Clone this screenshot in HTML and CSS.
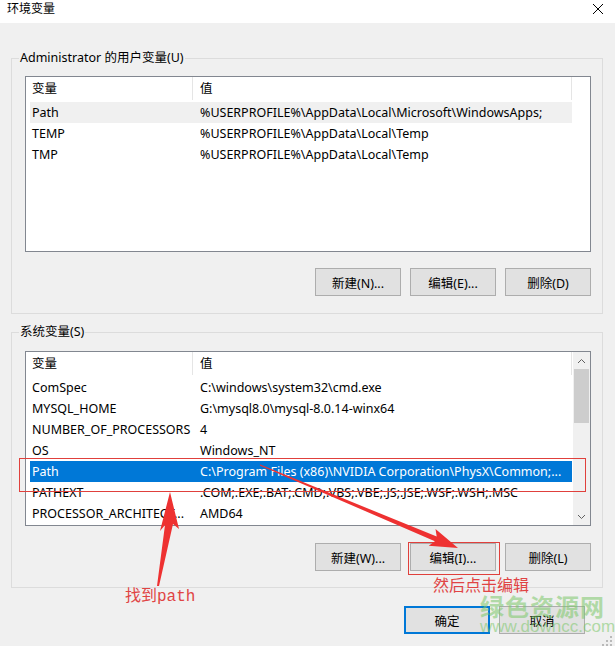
FILE: index.html
```html
<!DOCTYPE html>
<html lang="zh-CN">
<head>
  <meta charset="UTF-8" />
  <title>环境变量</title>
  <link rel="stylesheet" href="styles.css">
</head>
<body>

<div class="window">
  <div class="titlebar">
    <span class="title">环境变量</span>
    <svg class="close" width="12" height="12" viewBox="0 0 12 12">
      <path d="M1 1 L11 11 M11 1 L1 11" stroke="#000" stroke-width="1" fill="none"/>
    </svg>
  </div>

  <div class="content">
    <fieldset class="group">
      <legend>Administrator 的用户变量(U)</legend>
      <div class="listbox user-list">
        <div class="list-body">
          <div class="row head"><span class="c1">变量</span><span class="c2">值</span></div>
          <div class="row soft"><span class="c1">Path</span><span class="c2">%USERPROFILE%\AppData\Local\Microsoft\WindowsApps;</span></div>
          <div class="row"><span class="c1">TEMP</span><span class="c2">%USERPROFILE%\AppData\Local\Temp</span></div>
          <div class="row"><span class="c1">TMP</span><span class="c2">%USERPROFILE%\AppData\Local\Temp</span></div>
        </div>
      </div>
      <div class="btn-row">
        <button class="btn">新建(N)...</button>
        <button class="btn">编辑(E)...</button>
        <button class="btn">删除(D)</button>
      </div>
    </fieldset>

    <fieldset class="group second">
      <legend>系统变量(S)</legend>
      <div class="listbox sys-list">
        <div class="list-body">
          <div class="row head"><span class="c1">变量</span><span class="c2">值</span></div>
          <div class="row"><span class="c1">ComSpec</span><span class="c2">C:\windows\system32\cmd.exe</span></div>
          <div class="row"><span class="c1">MYSQL_HOME</span><span class="c2">G:\mysql8.0\mysql-8.0.14-winx64</span></div>
          <div class="row"><span class="c1">NUMBER_OF_PROCESSORS</span><span class="c2">4</span></div>
          <div class="row"><span class="c1">OS</span><span class="c2">Windows_NT</span></div>
          <div class="row selected"><span class="c1">Path</span><span class="c2">C:\Program Files (x86)\NVIDIA Corporation\PhysX\Common;...</span></div>
          <div class="row"><span class="c1">PATHEXT</span><span class="c2">.COM;.EXE;.BAT;.CMD;.VBS;.VBE;.JS;.JSE;.WSF;.WSH;.MSC</span></div>
          <div class="row"><span class="c1">PROCESSOR_ARCHITECT...</span><span class="c2">AMD64</span></div>
        </div>
        <div class="scrollbar">
          <div class="sb-arrow">
            <svg width="9" height="6" viewBox="0 0 9 6"><path d="M1 5 L4.5 1.5 L8 5" stroke="#606060" fill="none"/></svg>
          </div>
          <div class="sb-track">
            <div class="sb-thumb"></div>
          </div>
          <div class="sb-arrow">
            <svg width="9" height="6" viewBox="0 0 9 6"><path d="M1 1 L4.5 4.5 L8 1" stroke="#606060" fill="none"/></svg>
          </div>
        </div>
      </div>
      <div class="btn-row">
        <button class="btn">新建(W)...</button>
        <button class="btn">编辑(I)...</button>
        <button class="btn">删除(L)</button>
      </div>
    </fieldset>

    <div class="footer">
      <button class="btn default">确定</button>
      <button class="btn">取消</button>
    </div>
  </div>

  <!-- red marks drawn over the screenshot -->
  <svg class="marks" width="615" height="646" viewBox="0 0 615 646">
    <rect x="19.5" y="458.5" width="566" height="33" fill="none" stroke="#e0403c" stroke-width="1"/>
    <rect x="408.5" y="542.5" width="91" height="32" fill="none" stroke="#e0403c" stroke-width="1"/>
    <polygon fill="#ee3131" points="170,492 179,529 173,524 159,586 157,586 165,525 160,531"/>
    <polygon fill="#ee3131" points="458,548 435.5,529.1 436.7,536.6 260.2,464.5 259.8,465.5 434.9,541.2 428.7,545.7"/>
    <g fill="#b9b9b9">
      <rect x="610" y="636" width="2" height="2"/>
      <rect x="606" y="640" width="2" height="2"/>
      <rect x="610" y="640" width="2" height="2"/>
      <rect x="602" y="644" width="2" height="2"/>
      <rect x="606" y="644" width="2" height="2"/>
      <rect x="610" y="644" width="2" height="2"/>
    </g>
  </svg>
  <div class="note note-find">找到path</div>
  <div class="note note-edit">然后点击编辑</div>
  <div class="watermark">
    <div class="wm-name">绿色资源网</div>
    <div class="wm-url">www.downcc.com</div>
  </div>
</div>

</body>
</html>
```

FILE: styles.css
```css
body {
  margin: 0;
  font-family: "Noto Sans", "Noto Sans CJK SC", sans-serif;
  font-size: 12.5px;
  color: #000;
}
.window {
  width: 615px;
  height: 646px;
  background: #f0f0f0;
  position: relative;
  overflow: hidden;
}
.titlebar {
  height: 23px;
  background: #fff;
  display: flex;
  justify-content: space-between;
  padding: 0 11px 0 7px;
}
.title {
  font-size: 12px;
  line-height: 16px;
  font-family: "Noto Sans CJK SC", sans-serif;
}
.close { margin-top: 3px; }

.content {
  padding-top: 27px;
}
.group {
  margin: 0 12px 0 11px;
  border: 1px solid #dcdcdc;
  padding: 10px 11px 17px 13px;
  min-width: 0;
}
.group.second {
  margin-top: 10px;
  padding: 11px 11px 16px 13px;
}
.group legend {
  line-height: 16px;
  padding: 0 1px;
  margin-left: -6px;
}

.listbox {
  border: 1px solid #828790;
  background: #fff;
  display: flex;
}
.user-list { height: 174px; }
.sys-list { height: 173px; }
.list-body {
  flex: 1;
  padding-left: 4px;
  overflow: hidden;
}
.row {
  display: flex;
  width: 542px;
  height: 21px;
  line-height: 21px;
  white-space: nowrap;
}
.row .c1 {
  width: 161px;
  padding-left: 2px;
  overflow: hidden;
}
.row .c2 {
  width: 372px;
  padding-left: 7px;
  overflow: hidden;
}
.row.head {
  height: 25px;
  line-height: 24px;
}
.row.head .c1,
.row.head .c2 {
  border-right: 1px solid #e5e5e5;
  height: 23px;
}
.row.head .c1 { width: 160px; }
.row.head .c2 { width: 371px; }
.row.soft { background: #f0f0f0; }
.row.selected {
  background: #0078d7;
  color: #fff;
}

.scrollbar {
  width: 17px;
  background: #f0f0f0;
  display: flex;
  flex-direction: column;
}
.sb-arrow {
  height: 17px;
  display: flex;
  align-items: center;
  justify-content: center;
}
.sb-track { flex: 1; }
.sb-thumb {
  height: 54px;
  margin: 0 1px;
  background: #cdcdcd;
}

.btn-row {
  display: flex;
  justify-content: flex-end;
  gap: 9px;
  margin-top: 16px;
}
.group.second .btn-row { margin-top: 17px; }
.btn {
  width: 86px;
  height: 28px;
  background: #e1e1e1;
  border: 1px solid #adadad;
  font-family: "Noto Sans", "Noto Sans CJK SC", sans-serif;
  font-size: 12.5px;
  color: #000;
  padding: 0;
}
.btn.default {
  border: 2px solid #0078d7;
}
.footer {
  display: flex;
  justify-content: flex-end;
  gap: 9px;
  margin-top: 18px;
  padding-right: 30px;
}

.marks {
  position: absolute;
  top: 0;
  left: 0;
  pointer-events: none;
}
.note {
  position: absolute;
  color: #e04444;
  font-family: "Liberation Mono", "Noto Sans CJK SC", monospace;
  font-size: 16px;
  line-height: 20px;
}
.note-find { left: 125px; top: 587px; }
.note-edit { left: 433px; top: 577px; }

.watermark {
  position: absolute;
  left: 480px;
  top: 592px;
  opacity: 0.55;
  color: #7cc86a;
  pointer-events: none;
}
.wm-name {
  font-family: "Noto Sans CJK SC", sans-serif;
  font-weight: bold;
  font-size: 24px;
  line-height: 28px;
  letter-spacing: 1px;
}
.wm-url {
  font-family: "Liberation Sans", Arial, sans-serif;
  font-size: 17px;
  line-height: 18px;
  margin-top: -2px;
}
```
